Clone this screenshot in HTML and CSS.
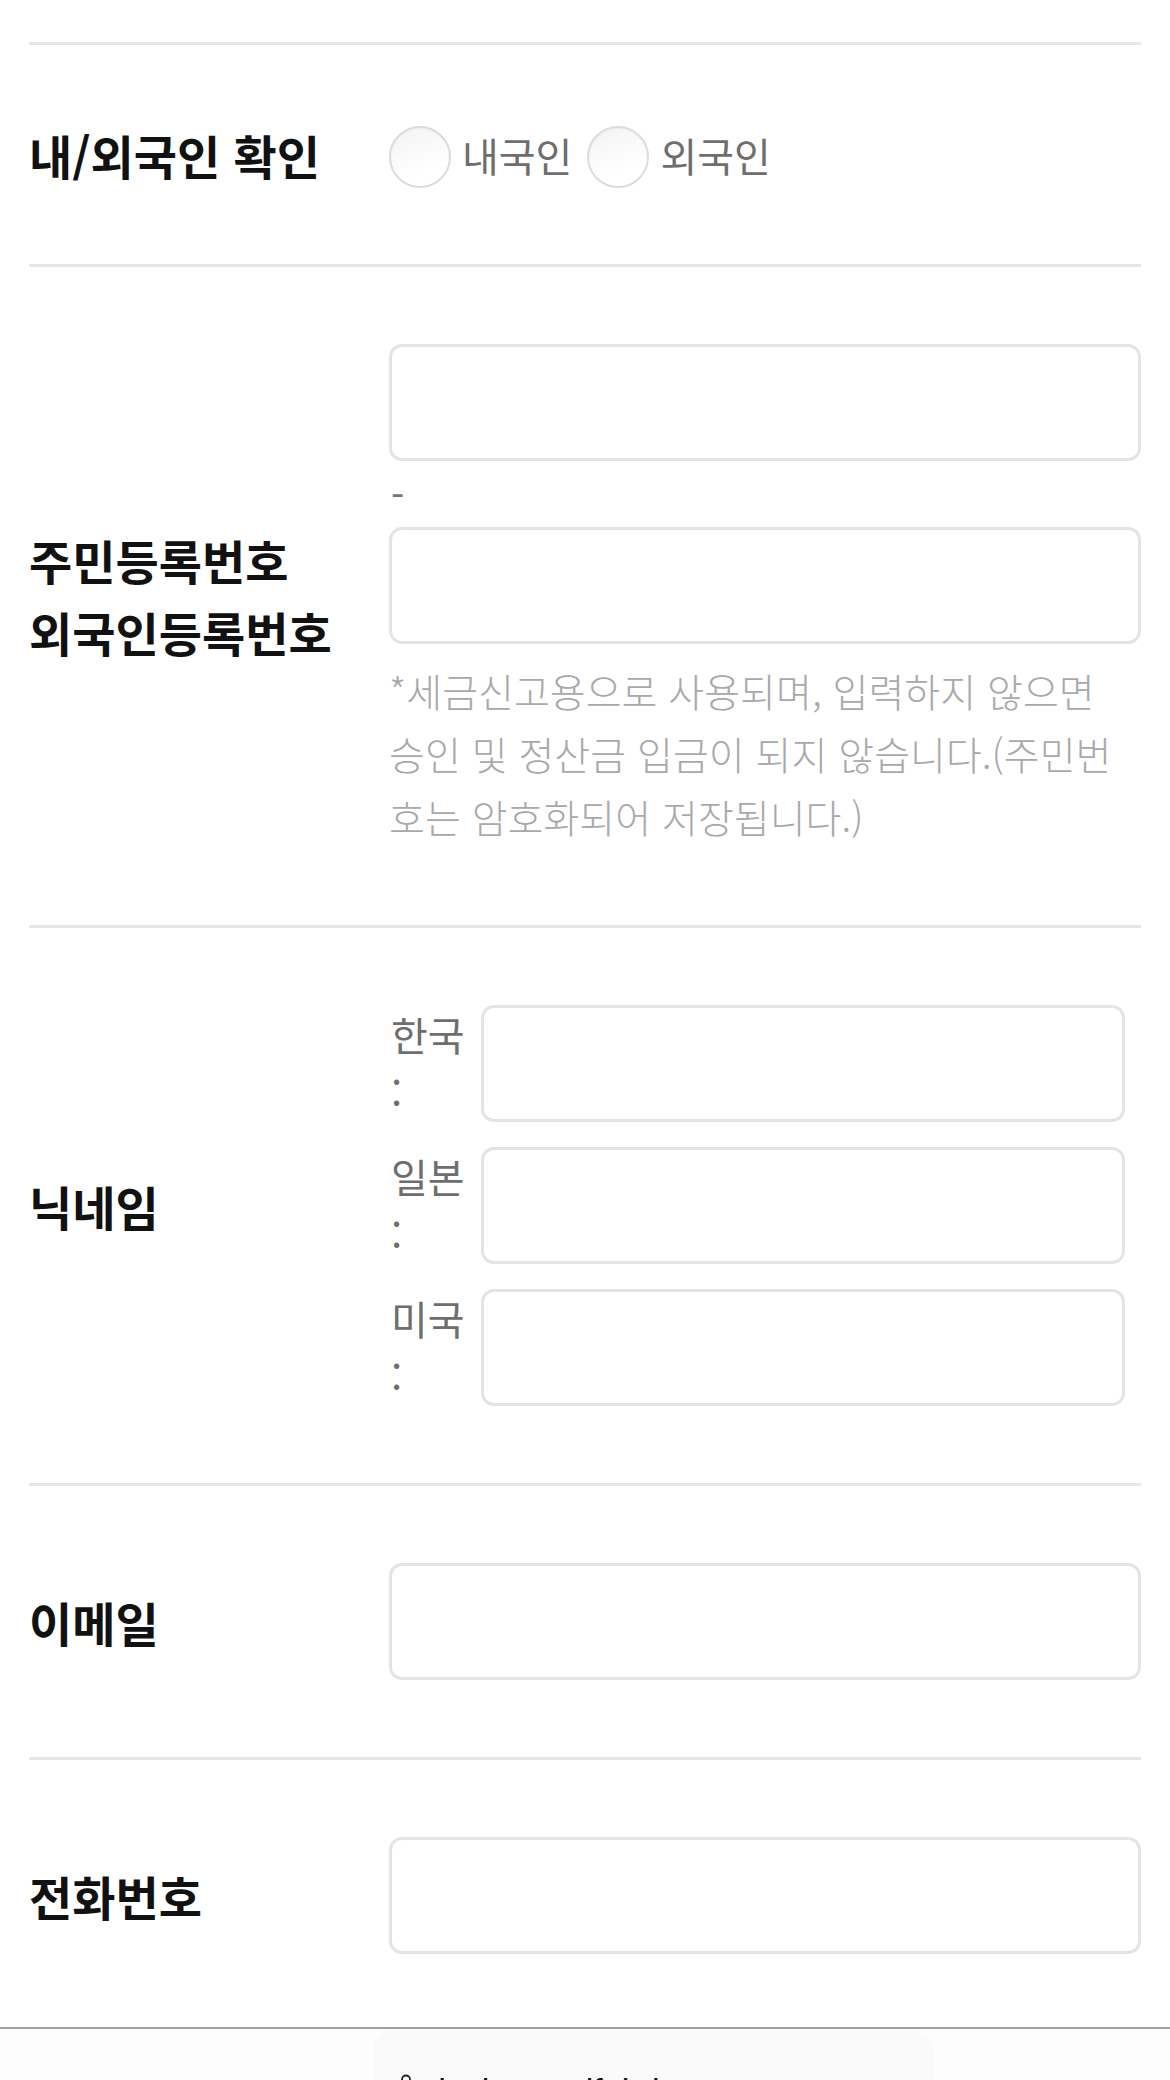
FILE: index.html
```html
<!DOCTYPE html>
<html lang="ko">
<head>
    <meta charset="UTF-8">
    <meta name="viewport" content="width=device-width, initial-scale=1.0">
    <title>회원정보</title>
    <link rel="stylesheet" href="styles.css">
</head>
<body>
    <div class="form">
        <div class="row">
            <div class="label">내/외국인 확인</div>
            <div class="field">
                <div class="radios">
                    <label class="radio"><input type="radio" name="nation"><span>내국인</span></label>
                    <label class="radio"><input type="radio" name="nation"><span>외국인</span></label>
                </div>
            </div>
        </div>

        <div class="row">
            <div class="label label-stack">주민등록번호<br>외국인등록번호</div>
            <div class="field">
                <input class="text-input" type="text">
                <div class="dash">-</div>
                <input class="text-input" type="password">
                <p class="help">*세금신고용으로 사용되며, 입력하지 않으면 승인 및 정산금 입금이 되지 않습니다.(주민번호는 암호화되어 저장됩니다.)</p>
            </div>
        </div>

        <div class="row">
            <div class="label">닉네임</div>
            <div class="field">
                <div class="nick">
                    <span class="nick-label">한국:</span>
                    <input class="text-input" type="text">
                </div>
                <div class="nick">
                    <span class="nick-label">일본:</span>
                    <input class="text-input" type="text">
                </div>
                <div class="nick">
                    <span class="nick-label">미국:</span>
                    <input class="text-input" type="text">
                </div>
            </div>
        </div>

        <div class="row">
            <div class="label">이메일</div>
            <div class="field">
                <input class="text-input" type="email">
            </div>
        </div>

        <div class="row">
            <div class="label">전화번호</div>
            <div class="field">
                <input class="text-input" type="tel">
            </div>
        </div>
    </div>

    <div class="browser-bar">
        <div class="address">
            <svg class="lock" width="14" height="19" viewBox="0 0 14 19">
                <path d="M3 8V5.5a4 4 0 0 1 8 0V8" fill="none" stroke="#222" stroke-width="1.8"/>
                <rect x="1" y="8" width="12" height="10" rx="2" fill="#222"/>
            </svg>
            <span>design.realfabric.com</span>
        </div>
    </div>
</body>
</html>
```

FILE: styles.css
```css
:root {
    --text-color: #111;
    --sub-color: #6e6e6e;
    --help-color: #a9a9a9;
    --line-color: #e6e6e6;
    --input-border: #e4e4e4;
}

body {
    margin: 0;
    background-color: #fff;
    font-family: "Noto Sans CJK KR", "Noto Sans", sans-serif;
    color: var(--text-color);
}

.form {
    padding: 42px 29px 0;
}

.row {
    display: flex;
    align-items: center;
    border-top: 3px solid var(--line-color);
    padding: 77px 0;
}

.label {
    width: 360px;
    flex-shrink: 0;
    font-size: 47px;
    font-weight: 700;
    line-height: 62px;
}

.label-stack {
    line-height: 72px;
}

.field {
    flex: 1;
    min-width: 0;
}

.radios {
    display: flex;
    align-items: center;
    gap: 15px;
    height: 65px;
}

.radio {
    display: flex;
    align-items: center;
    gap: 11px;
    font-size: 40px;
    line-height: 62px;
    color: var(--sub-color);
}

.radio input {
    -webkit-appearance: none;
    appearance: none;
    width: 62px;
    height: 62px;
    margin: 4px 0 0;
    border: 2px solid #dcdcdc;
    border-radius: 50%;
    background: linear-gradient(160deg, #f3f3f3, #ffffff 70%);
    box-shadow: inset 0 1px 2px rgba(0, 0, 0, 0.04);
}

.text-input {
    display: block;
    box-sizing: border-box;
    width: 100%;
    height: 117px;
    margin: 0;
    border: 3px solid var(--input-border);
    border-radius: 13px;
    background-color: #fff;
    font-size: 38px;
    padding: 0 20px;
    outline: none;
}

.dash {
    height: 66px;
    font-size: 38px;
    line-height: 66px;
    color: #777;
    padding-left: 2px;
}

.help {
    margin: 15px 0 0;
    font-size: 39px;
    font-weight: 300;
    line-height: 63px;
    color: var(--help-color);
}

.nick {
    display: flex;
    align-items: flex-start;
    gap: 14px;
    margin-right: 16px;
}

.nick + .nick {
    margin-top: 25px;
}

.nick-label {
    width: 76px;
    flex-shrink: 0;
    padding-left: 2px;
    font-size: 40px;
    line-height: 58px;
    color: var(--sub-color);
    line-break: anywhere;
}

.nick .text-input {
    flex: 1;
}

/* safari bottom toolbar, sits over the page */
.browser-bar {
    position: fixed;
    left: 0;
    right: 0;
    bottom: 0;
    height: 51px;
    border-top: 2px solid #a0a0a0;
    background-color: #fdfdfd;
    padding-left: 373px;
    overflow: hidden;
}

.address {
    width: 560px;
    height: 80px;
    margin-top: 2px;
    box-sizing: border-box;
    padding: 42px 0 0 26px;
    border-radius: 18px;
    background-color: #fafafa;
    display: flex;
    align-items: flex-start;
    gap: 14px;
    font-family: "Liberation Sans", Arial, sans-serif;
    font-size: 34px;
    line-height: 34px;
    color: #111;
}

.lock {
    margin-top: 1px;
    flex-shrink: 0;
}
```
